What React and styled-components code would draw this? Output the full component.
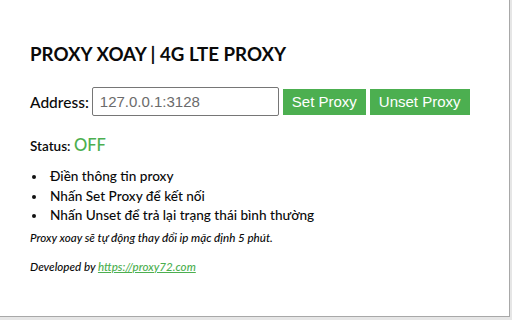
import React from "react";
import styled, { createGlobalStyle } from "styled-components";

const GlobalStyle = createGlobalStyle`
  html, body {
    margin: 0;
    padding: 0;
    background: #e6e6e6;
  }
  body {
    font-family: Lato, "Open Sans", sans-serif;
    font-weight: 500;
    color: #0a0a0a;
  }
`;

const Popup = styled.div`
  width: 510px;
  height: 317px;
  box-sizing: border-box;
  background: #fff;
  border-right: 1px solid #a8a8a8;
  border-bottom: 1px solid #a8a8a8;
  padding: 42px 0 0 30px;
`;

const Title = styled.h1`
  margin: 0;
  font-size: 18.7px;
  font-weight: 700;
  line-height: 24px;
`;

const AddressRow = styled.div`
  display: flex;
  align-items: center;
  margin-top: 21px;
`;

const Label = styled.label`
  font-size: 15.5px;
  margin-right: 3px;
`;

const AddressInput = styled.input`
  width: 187px;
  height: 29px;
  box-sizing: border-box;
  border: 1px solid #767676;
  border-radius: 2px;
  padding: 0 7px;
  font-family: "Liberation Sans", Arial, sans-serif;
  font-size: 15px;
  color: #6b6b6b;
  outline: none;
`;

const Button = styled.button`
  height: 26px;
  margin-left: 4px;
  padding: 0 9px;
  border: none;
  background: #4caf50;
  color: #fff;
  font-family: "Liberation Sans", Arial, sans-serif;
  font-size: 15px;
  cursor: pointer;
`;

const Status = styled.div`
  margin-top: 19px;
  font-size: 13.5px;
  font-weight: 600;
`;

const StatusValue = styled.span`
  color: #4caf50;
  font-size: 16.5px;
  font-weight: 500;
`;

const Steps = styled.ul`
  margin: 12px 0 0;
  padding: 0;
  list-style: none;
  font-size: 13.6px;
  line-height: 19.5px;
`;

const Step = styled.li`
  display: flex;
  align-items: center;

  &::before {
    content: "";
    flex: none;
    width: 4px;
    height: 4px;
    margin: 1px 14px 0 2px;
    border-radius: 50%;
    background: #111;
  }
`;

const Note = styled.p`
  margin: 5px 0 0;
  font-size: 11.6px;
  font-style: italic;
`;

const Credit = styled.p`
  margin: 16px 0 0;
  font-size: 11.6px;
  font-style: italic;
`;

const Link = styled.a`
  color: #4caf50;
`;

export default function App() {
  return (
    <>
      <GlobalStyle />
      <Popup>
        <Title>PROXY XOAY | 4G LTE PROXY</Title>
        <AddressRow>
          <Label>Address:</Label>
          <AddressInput defaultValue="127.0.0.1:3128" />
          <Button>Set Proxy</Button>
          <Button>Unset Proxy</Button>
        </AddressRow>
        <Status>
          Status: <StatusValue>OFF</StatusValue>
        </Status>
        <Steps>
          <Step>Điền thông tin proxy</Step>
          <Step>Nhấn Set Proxy để kết nối</Step>
          <Step>Nhấn Unset để trả lại trạng thái bình thường</Step>
        </Steps>
        <Note>Proxy xoay sẽ tự động thay đổi ip mặc định 5 phút.</Note>
        <Credit>
          Developed by <Link href="#">https://proxy72.com</Link>
        </Credit>
      </Popup>
    </>
  );
}
